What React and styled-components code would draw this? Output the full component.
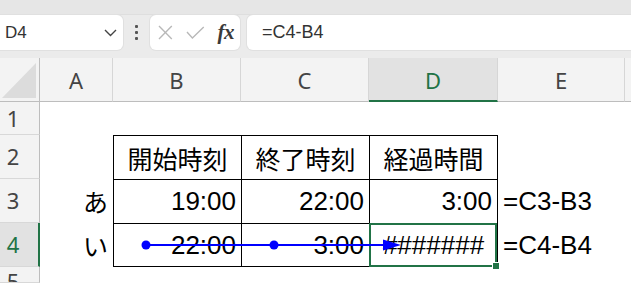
import React from "react";
import styled, { createGlobalStyle, css } from "styled-components";

const GlobalStyle = createGlobalStyle`
  html, body { margin: 0; padding: 0; background: #ffffff; }
  body { overflow: hidden; font-family: "Liberation Sans", Arial, sans-serif; }
`;

const GREEN = "#217346";

const Page = styled.div`
  width: 631px;
  height: 283px;
  overflow: hidden;
  display: flex;
  flex-direction: column;
  background: #e9e9e9;
`;

const TopStrip = styled.div`
  flex-shrink: 0;
  height: 14px;
  background: #e6e6e6;
  border-bottom: 1px solid #dedede;
`;

const FormulaBar = styled.div`
  flex-shrink: 0;
  display: flex;
  height: 35px;
  padding-bottom: 8px;
  background: #ebebeb;
`;

const NameBox = styled.div`
  width: 123px;
  background: #fff;
  border-radius: 0 6px 6px 0;
  box-shadow: 0 0 0 1px #e0e0e0;
  display: flex;
  align-items: center;
  justify-content: space-between;
  padding: 0 6px 0 5px;
  box-sizing: border-box;
  font-size: 17px;
  color: #333;
`;

const Ellipsis = styled.div`
  width: 27px;
  display: flex;
  flex-direction: column;
  align-items: center;
  justify-content: center;
  gap: 3px;
  & > span {
    width: 3px;
    height: 3px;
    background: #555;
    border-radius: 1px;
  }
`;

const FxBox = styled.div`
  width: 90px;
  background: #fff;
  border-radius: 6px;
  box-shadow: 0 0 0 1px #e0e0e0;
  display: flex;
  align-items: center;
  padding: 0 6px 0 8px;
  box-sizing: border-box;
  gap: 13px;
`;

const FxText = styled.span`
  font-family: "Liberation Serif", "Times New Roman", serif;
  font-style: italic;
  font-weight: bold;
  font-size: 21px;
  color: #3a3a3a;
  margin-left: auto;
  letter-spacing: -0.5px;
`;

const FormulaInput = styled.div`
  flex: 1;
  margin-left: 7px;
  background: #fff;
  border-radius: 6px 0 0 6px;
  box-shadow: 0 0 0 1px #e0e0e0;
  display: flex;
  align-items: center;
  padding-left: 15px;
  font-size: 18px;
  color: #333;
`;

const Grid = styled.div`
  position: relative;
  flex: 1;
  min-height: 0;
  overflow: hidden;
  background: #fff;
  display: grid;
  grid-template-columns: 40px 73px 128px 128px 129px 127px 1fr;
  grid-template-rows: 44px 33px 44px 44px 44px minmax(0, 1fr);
`;

const Corner = styled.div`
  position: relative;
  background: #f3f3f3;
  border-bottom: 1px solid #bdbdbd;
  border-right: 1px solid #bdbdbd;
  box-sizing: border-box;
  &::after {
    content: "";
    position: absolute;
    right: 3px;
    bottom: 3px;
    width: 34px;
    height: 35px;
    background: #dcdcdc;
    clip-path: polygon(100% 0, 100% 100%, 0 100%);
  }
`;

const ColHeader = styled.div`
  background: ${(p) => (p.$active ? "#e2e2e2" : "#f3f3f3")};
  color: ${(p) => (p.$active ? GREEN : "#444")};
  border-right: 1px solid #d6d6d6;
  border-bottom: ${(p) => (p.$active ? `2px solid ${GREEN}` : "1px solid #bdbdbd")};
  box-sizing: border-box;
  display: flex;
  align-items: center;
  justify-content: center;
  font-family: "Noto Sans", "Liberation Sans", sans-serif;
  font-size: 22px;
  padding-top: ${(p) => (p.$active ? "1px" : "0")};
`;

const RowHeader = styled.div`
  background: ${(p) => (p.$active ? "#e2e2e2" : "#f3f3f3")};
  color: ${(p) => (p.$active ? GREEN : "#444")};
  border-right: ${(p) => (p.$active ? `2px solid ${GREEN}` : "1px solid #bdbdbd")};
  border-bottom: 1px solid #d8d8d8;
  box-sizing: border-box;
  display: flex;
  align-items: ${(p) => (p.$top ? "flex-start" : "center")};
  justify-content: center;
  padding-right: ${(p) => (p.$active ? "12px" : "13px")};
  font-family: "Noto Sans", "Liberation Sans", sans-serif;
  font-size: 22px;
  line-height: 1.3;
  overflow: hidden;
`;

const Cell = styled.div`
  position: relative;
  box-sizing: border-box;
  display: flex;
  align-items: center;
  justify-content: ${(p) =>
    p.$align === "right" ? "flex-end" : p.$align === "left" ? "flex-start" : "center"};
  padding: 0 5px;
  color: #000;
  font-family: ${(p) =>
    p.$cjk
      ? `"Noto Sans CJK JP", "Noto Sans", sans-serif`
      : `"Liberation Sans", Arial, sans-serif`};
  font-size: ${(p) => (p.$cjk ? "25px" : "26px")};
  white-space: nowrap;
  ${(p) =>
    p.$table &&
    css`
      border-top: 1px solid #000;
      border-left: 1px solid #000;
    `}
  ${(p) => p.$lastCol && css`border-right: 1px solid #000;`}
  ${(p) => p.$lastRow && css`border-bottom: 1px solid #000;`}
`;

const Selection = styled.div`
  position: absolute;
  top: -1px;
  left: -1px;
  right: 0;
  bottom: -1px;
  border: 2px solid ${GREEN};
  pointer-events: none;
  &::after {
    content: "";
    position: absolute;
    right: -5px;
    bottom: -5px;
    width: 6px;
    height: 6px;
    background: ${GREEN};
    border: 1px solid #fff;
  }
`;

const Overlay = styled.svg`
  position: absolute;
  left: 0;
  top: 0;
  width: 631px;
  height: 225px;
  pointer-events: none;
  z-index: 2;
`;

const columns = ["A", "B", "C", "D", "E"];

const rows = [
  { n: 1, cells: ["", "", "", "", ""] },
  { n: 2, cells: ["", "開始時刻", "終了時刻", "経過時間", ""] },
  { n: 3, cells: ["あ", "19:00", "22:00", "3:00", "=C3-B3"] },
  { n: 4, cells: ["い", "22:00", "3:00", "#######", "=C4-B4"] },
  { n: 5, cells: ["", "", "", "", ""] },
];

function cellProps(rowN, colIdx, value) {
  const table = rowN >= 2 && rowN <= 4 && colIdx >= 1 && colIdx <= 3;
  let align = "right";
  if (colIdx === 4) align = "left";
  if (rowN === 2 || (rowN === 4 && colIdx === 3)) align = "center";
  const cjk = /[\u3040-\u30ff\u4e00-\u9fff]/.test(value);
  return {
    $table: table,
    $lastCol: table && colIdx === 3,
    $lastRow: table && rowN === 4,
    $align: align,
    $cjk: cjk,
  };
}

export default function App() {
  return (
    <>
      <GlobalStyle />
      <Page>
        <TopStrip />
        <FormulaBar>
          <NameBox>
            <span>D4</span>
            <svg width="13" height="8" viewBox="0 0 13 8">
              <polyline points="1,1 6.5,6.5 12,1" fill="none" stroke="#444" strokeWidth="1.4" />
            </svg>
          </NameBox>
          <Ellipsis>
            <span />
            <span />
            <span />
          </Ellipsis>
          <FxBox>
            <svg width="15" height="15" viewBox="0 0 15 15">
              <line x1="1" y1="1" x2="14" y2="14" stroke="#b8b8b8" strokeWidth="1.4" />
              <line x1="14" y1="1" x2="1" y2="14" stroke="#b8b8b8" strokeWidth="1.4" />
            </svg>
            <svg width="19" height="13" viewBox="0 0 19 13">
              <polyline points="1,6 6.5,12 18,1" fill="none" stroke="#b8b8b8" strokeWidth="1.4" />
            </svg>
            <FxText>fx</FxText>
          </FxBox>
          <FormulaInput>=C4-B4</FormulaInput>
        </FormulaBar>
        <Grid>
          <Corner />
          {columns.map((c) => (
            <ColHeader key={c} $active={c === "D"}>
              {c}
            </ColHeader>
          ))}
          <ColHeader />
          {rows.map((r) => (
            <React.Fragment key={r.n}>
              <RowHeader $active={r.n === 4} $top={r.n === 5}>
                {r.n}
              </RowHeader>
              {r.cells.map((v, i) => (
                <Cell key={i} {...cellProps(r.n, i, v)}>
                  {v}
                  {r.n === 4 && i === 3 && <Selection />}
                </Cell>
              ))}
              <Cell />
            </React.Fragment>
          ))}
          <Overlay viewBox="0 0 631 225">
            <line x1="146" y1="187" x2="386" y2="187" stroke="#0000ff" strokeWidth="2" />
            <polygon points="401,187 383,181.5 383,192.5" fill="#0000ff" />
            <circle cx="146" cy="187" r="4.5" fill="#0000ff" />
            <circle cx="274" cy="187" r="4.5" fill="#0000ff" />
          </Overlay>
        </Grid>
      </Page>
    </>
  );
}
